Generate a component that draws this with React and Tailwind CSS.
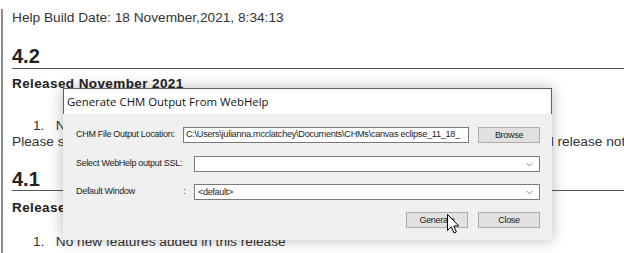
import { ChevronDown } from 'lucide-react'

const doc = "font-['Liberation_Sans',Arial,sans-serif] text-[#333]"
const win = "font-['Liberation_Sans',Arial,sans-serif] text-[9px] tracking-[-0.3px] text-[#222] whitespace-nowrap"

function Select({ value }) {
  return (
    <div className="flex items-center justify-between w-[346px] h-[16px] bg-white border border-[#7a7a7a] pl-[3px] pr-[4px]">
      <span className="leading-none">{value}</span>
      <ChevronDown size={11} strokeWidth={1.3} className="text-[#444]" />
    </div>
  )
}

function Button({ children }) {
  return (
    <div className="flex items-center justify-center w-[62px] h-[16px] bg-[#e1e1e1] border border-[#adadad] leading-none">
      {children}
    </div>
  )
}

export default function App() {
  return (
    <div className={`relative w-[624px] h-[253px] overflow-hidden bg-white ${doc}`}>
      <div className="h-full ml-px border-l-2 border-[#8c8c8c] pl-[9px] whitespace-nowrap">
        <p className="mt-[9px] text-[13.7px] leading-[18px]">Help Build Date: 18 November,2021, 8:34:13</p>

        <h2 className="mt-[18px] h-[24px] text-[20px] font-bold leading-[22px] text-[#222] border-b border-[#555]">4.2</h2>
        <p className="mt-[7px] text-[13.5px] font-bold leading-[16px] tracking-[0.4px] text-[#222]">Released November 2021</p>
        <p className="mt-[26px] pl-[21px] text-[13.7px] leading-[16px]">1.&nbsp;&nbsp;&nbsp;No new features added in this release</p>
        <p className="text-[13.7px] leading-[16px]">Please see the Canvas Eclipse 4.2 documentation for the full details of the&nbsp; entire general release notes</p>

        <h2 className="mt-[18px] h-[23px] text-[20px] font-bold leading-[22px] text-[#222] border-b border-[#555]">4.1</h2>
        <p className="mt-[9px] text-[13.5px] font-bold leading-[16px] tracking-[0.4px] text-[#222]">Released October 2021</p>
        <p className="mt-[18px] pl-[21px] text-[13.7px] leading-[16px]">1.&nbsp;&nbsp;&nbsp;No new features added in this release</p>
      </div>

      {/* dialog window */}
      <div className={`absolute left-[63px] top-[88px] w-[489px] h-[152px] flex flex-col shadow-[0_0_14px_rgba(0,0,0,0.28)] ${win}`}>
        <div className="h-[26px] bg-white border border-b-0 border-[#5f5f5f] pl-[3px] flex items-center font-['Open_Sans',sans-serif] text-[11.4px] tracking-normal text-[#111]">
          Generate CHM Output From WebHelp
        </div>
        <div className="flex-1 bg-[#f0f0f0] pl-[13px] pt-[13px]">
          <div className="flex items-center h-[16px]">
            <span className="w-[107px]">CHM File Output Location:</span>
            <div className="w-[286px] h-[16px] bg-white border border-[#7a7a7a] pl-[2px] flex items-center overflow-hidden text-[9.2px] tracking-[-0.3px]">
              C:\Users\julianna.mcclatchey\Documents\CHMs\canvas eclipse_11_18_
            </div>
            <div className="ml-[9px]">
              <Button>Browse</Button>
            </div>
          </div>

          <div className="flex items-center h-[16px] mt-[13px]">
            <span className="w-[118px]">Select WebHelp output SSL:</span>
            <Select value="" />
          </div>

          <div className="flex items-center h-[16px] mt-[12px]">
            <span className="w-[107px]">Default Window</span>
            <span className="w-[11px]">:</span>
            <Select value="<default>" />
          </div>

          <div className="flex justify-end gap-[10px] pr-[12px] mt-[12px]">
            <Button>Generate</Button>
            <Button>Close</Button>
          </div>
        </div>
      </div>

      {/* mouse pointer */}
      <svg className="absolute left-[447px] top-[214px]" width="13" height="21" viewBox="0 0 13 21">
        <path d="M0.5 0.5 L0.5 16.5 L4.3 12.8 L7 19 L9.4 18 L6.8 12 L11.8 12 Z" fill="white" stroke="black" strokeWidth="1" strokeLinejoin="round" />
      </svg>
    </div>
  )
}
